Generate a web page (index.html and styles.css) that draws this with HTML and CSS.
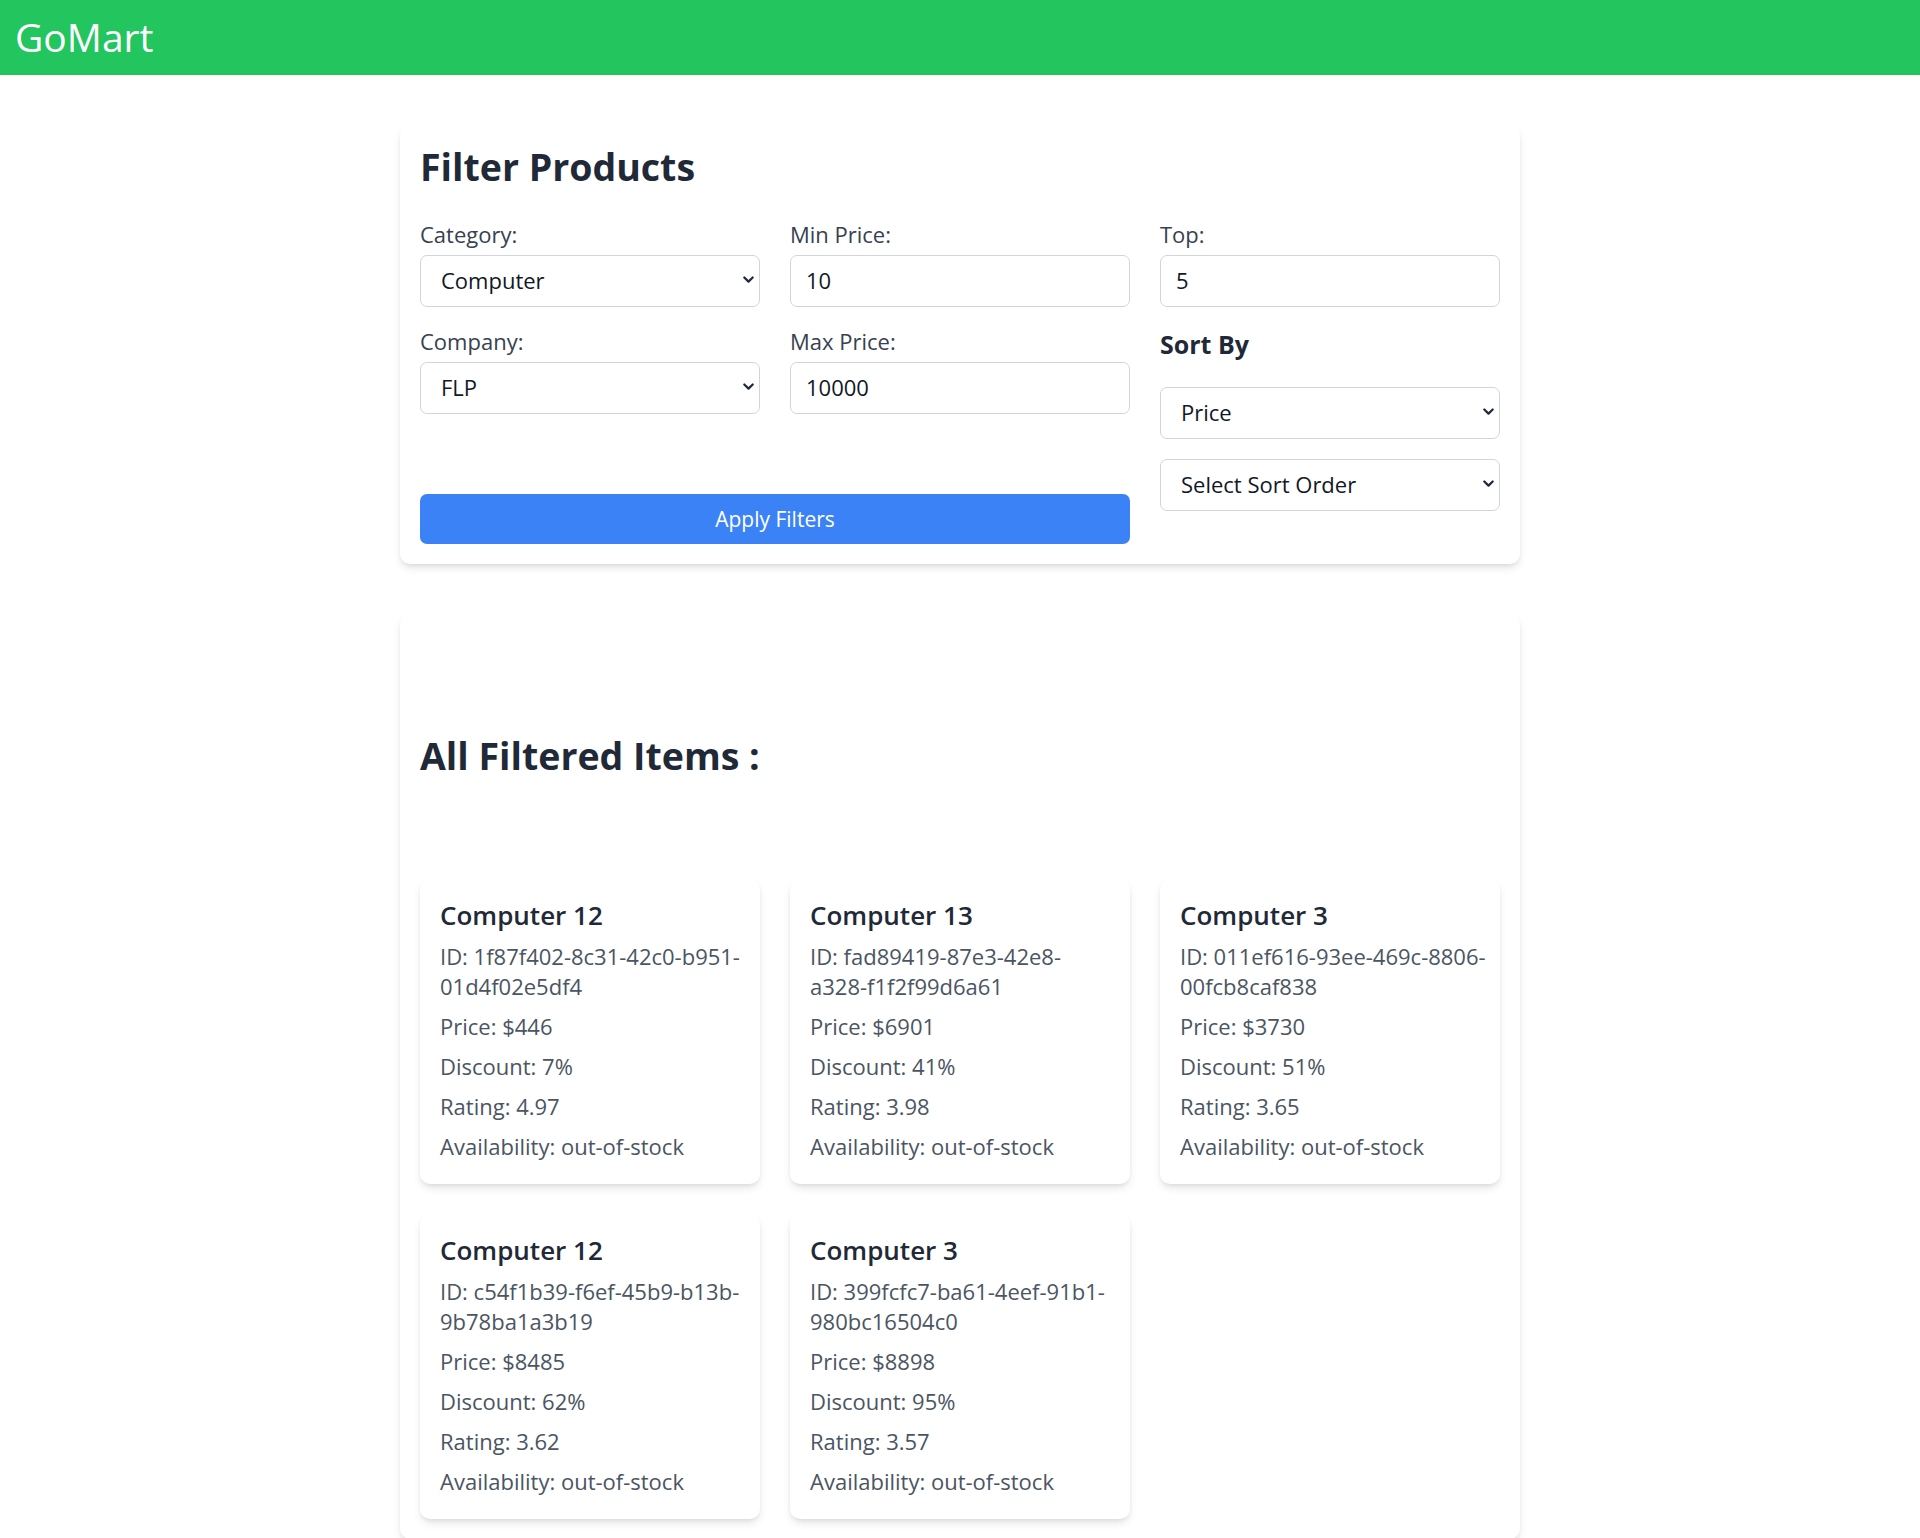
FILE: index.html
```html
<!DOCTYPE html>
<html lang="en">
<head>
<meta charset="utf-8">
<title>GoMart</title>
<link rel="stylesheet" href="styles.css">
</head>
<body>
<header class="topbar">
  <div class="brand">GoMart</div>
</header>
<main class="container">
  <section class="panel filter-panel">
    <h2 class="panel-title">Filter Products</h2>
    <div class="filter-layout">
      <div class="filter-main">
        <div class="field-grid">
          <div class="field">
            <label class="field-label">Category:</label>
            <div class="select-wrap">
              <select class="control select">
                <option>Computer</option>
              </select>
              <svg class="chevron" viewBox="0 0 10 7" aria-hidden="true"><path d="M1.2 1.2 L5 5 L8.8 1.2"/></svg>
            </div>
          </div>
          <div class="field">
            <label class="field-label">Min Price:</label>
            <input class="control" type="text" value="10">
          </div>
          <div class="field">
            <label class="field-label">Company:</label>
            <div class="select-wrap">
              <select class="control select">
                <option>FLP</option>
              </select>
              <svg class="chevron" viewBox="0 0 10 7" aria-hidden="true"><path d="M1.2 1.2 L5 5 L8.8 1.2"/></svg>
            </div>
          </div>
          <div class="field">
            <label class="field-label">Max Price:</label>
            <input class="control" type="text" value="10000">
          </div>
        </div>
        <button class="apply-btn" type="button">Apply Filters</button>
      </div>
      <div class="filter-side">
        <div class="field">
          <label class="field-label">Top:</label>
          <input class="control" type="text" value="5">
        </div>
        <h3 class="sort-title">Sort By</h3>
        <div class="select-wrap sort-select">
          <select class="control select">
            <option>Price</option>
          </select>
          <svg class="chevron" viewBox="0 0 10 7" aria-hidden="true"><path d="M1.2 1.2 L5 5 L8.8 1.2"/></svg>
        </div>
        <div class="select-wrap">
          <select class="control select">
            <option>Select Sort Order</option>
          </select>
          <svg class="chevron" viewBox="0 0 10 7" aria-hidden="true"><path d="M1.2 1.2 L5 5 L8.8 1.2"/></svg>
        </div>
      </div>
    </div>
  </section>

  <section class="panel results-panel">
    <h2 class="results-title">All Filtered Items :</h2>
    <div class="product-grid">
      <article class="product-card">
        <h3 class="product-name">Computer 12</h3>
        <p class="product-line product-id">ID: 1f87f402-8c31-42c0-b951-<br>01d4f02e5df4</p>
        <p class="product-line">Price: $446</p>
        <p class="product-line">Discount: 7%</p>
        <p class="product-line">Rating: 4.97</p>
        <p class="product-line">Availability: out-of-stock</p>
      </article>
      <article class="product-card">
        <h3 class="product-name">Computer 13</h3>
        <p class="product-line product-id">ID: fad89419-87e3-42e8-<br>a328-f1f2f99d6a61</p>
        <p class="product-line">Price: $6901</p>
        <p class="product-line">Discount: 41%</p>
        <p class="product-line">Rating: 3.98</p>
        <p class="product-line">Availability: out-of-stock</p>
      </article>
      <article class="product-card">
        <h3 class="product-name">Computer 3</h3>
        <p class="product-line product-id">ID: 011ef616-93ee-469c-8806-<br>00fcb8caf838</p>
        <p class="product-line">Price: $3730</p>
        <p class="product-line">Discount: 51%</p>
        <p class="product-line">Rating: 3.65</p>
        <p class="product-line">Availability: out-of-stock</p>
      </article>
      <article class="product-card">
        <h3 class="product-name">Computer 12</h3>
        <p class="product-line product-id">ID: c54f1b39-f6ef-45b9-b13b-<br>9b78ba1a3b19</p>
        <p class="product-line">Price: $8485</p>
        <p class="product-line">Discount: 62%</p>
        <p class="product-line">Rating: 3.62</p>
        <p class="product-line">Availability: out-of-stock</p>
      </article>
      <article class="product-card">
        <h3 class="product-name">Computer 3</h3>
        <p class="product-line product-id">ID: 399fcfc7-ba61-4eef-91b1-<br>980bc16504c0</p>
        <p class="product-line">Price: $8898</p>
        <p class="product-line">Discount: 95%</p>
        <p class="product-line">Rating: 3.57</p>
        <p class="product-line">Availability: out-of-stock</p>
      </article>
    </div>
  </section>
</main>
</body>
</html>
```

FILE: styles.css
```css
* {
  box-sizing: border-box;
}

html, body {
  margin: 0;
  padding: 0;
  background: #ffffff;
}

body {
  font-family: "Open Sans", "Noto Sans", sans-serif;
  color: #1f2937;
  font-size: 22px;
  line-height: 30px;
}

.topbar {
  background: #22c55e;
  height: 75px;
  padding: 15px;
}

.brand {
  color: #ffffff;
  font-size: 39px;
  line-height: 45px;
  font-weight: 400;
  margin-top: -1px;
}

.container {
  width: 1120px;
  margin: 0 auto;
}

.panel {
  background: #ffffff;
  border-radius: 10px;
  padding: 20px;
  box-shadow: 0 5px 8px -1px rgba(0, 0, 0, 0.1), 0 2px 5px -2px rgba(0, 0, 0, 0.1);
}

.filter-panel {
  margin-top: 50px;
}

.panel-title {
  margin: -1px 0 31px 0;
  font-size: 37.5px;
  line-height: 45px;
  font-weight: 700;
  color: #1f2937;
}

.filter-layout {
  display: grid;
  grid-template-columns: repeat(3, minmax(0, 1fr));
  column-gap: 30px;
}

.filter-main {
  grid-column: span 2;
  display: flex;
  flex-direction: column;
}

.field-grid {
  display: grid;
  grid-template-columns: repeat(2, minmax(0, 1fr));
  column-gap: 30px;
  row-gap: 20px;
}

.field {
  display: flex;
  flex-direction: column;
}

.field-label {
  display: block;
  font-size: 22px;
  line-height: 29px;
  color: #374151;
  margin-bottom: 6px;
}

.control {
  display: block;
  width: 100%;
  height: 52px;
  border: 1px solid #d1d5db;
  border-radius: 7px;
  padding: 0 15px 2px 15px;
  font-family: "Open Sans", "Noto Sans", sans-serif;
  font-size: 22px;
  color: #111827;
  background: #ffffff;
  outline: none;
}

.select-wrap {
  position: relative;
}

.select {
  -webkit-appearance: none;
  appearance: none;
  padding-left: 20px;
  padding-right: 40px;
}

.chevron {
  position: absolute;
  right: 6px;
  top: 21px;
  width: 11px;
  height: 8px;
  fill: none;
  stroke: #1f2937;
  stroke-width: 2;
  stroke-linecap: round;
  stroke-linejoin: round;
  pointer-events: none;
}

.apply-btn {
  margin-top: 80px;
  height: 50px;
  width: 100%;
  border: none;
  border-radius: 7px;
  background: #3b82f6;
  color: #ffffff;
  font-family: "Open Sans", "Noto Sans", sans-serif;
  font-size: 21px;
  line-height: 30px;
  padding: 0 0 1px 0;
}

.filter-side {
  display: flex;
  flex-direction: column;
}

.sort-title {
  margin: 20px 0 26px 0;
  font-size: 25px;
  line-height: 34px;
  font-weight: 700;
  color: #1f2937;
}

.sort-select {
  margin-bottom: 20px;
}

.results-panel {
  margin-top: 50px;
}

.results-title {
  margin: 99px 0 101px 0;
  font-size: 37.5px;
  line-height: 45px;
  font-weight: 700;
  color: #1f2937;
}

.product-grid {
  display: grid;
  grid-template-columns: repeat(3, minmax(0, 1fr));
  gap: 30px;
}

.product-card {
  background: #ffffff;
  border-radius: 10px;
  padding: 19px 20px 23px 20px;
  box-shadow: 0 5px 8px -1px rgba(0, 0, 0, 0.1), 0 2px 5px -2px rgba(0, 0, 0, 0.1);
}

.product-name {
  margin: 0 0 8px 0;
  font-size: 26px;
  line-height: 35px;
  font-weight: 600;
  color: #1f2937;
}

.product-line {
  margin: 0 0 10px 0;
  font-size: 22px;
  line-height: 30px;
  color: #4b5563;
}

.product-line:last-child {
  margin-bottom: 0;
}

.product-id {
  white-space: nowrap;
}
```
